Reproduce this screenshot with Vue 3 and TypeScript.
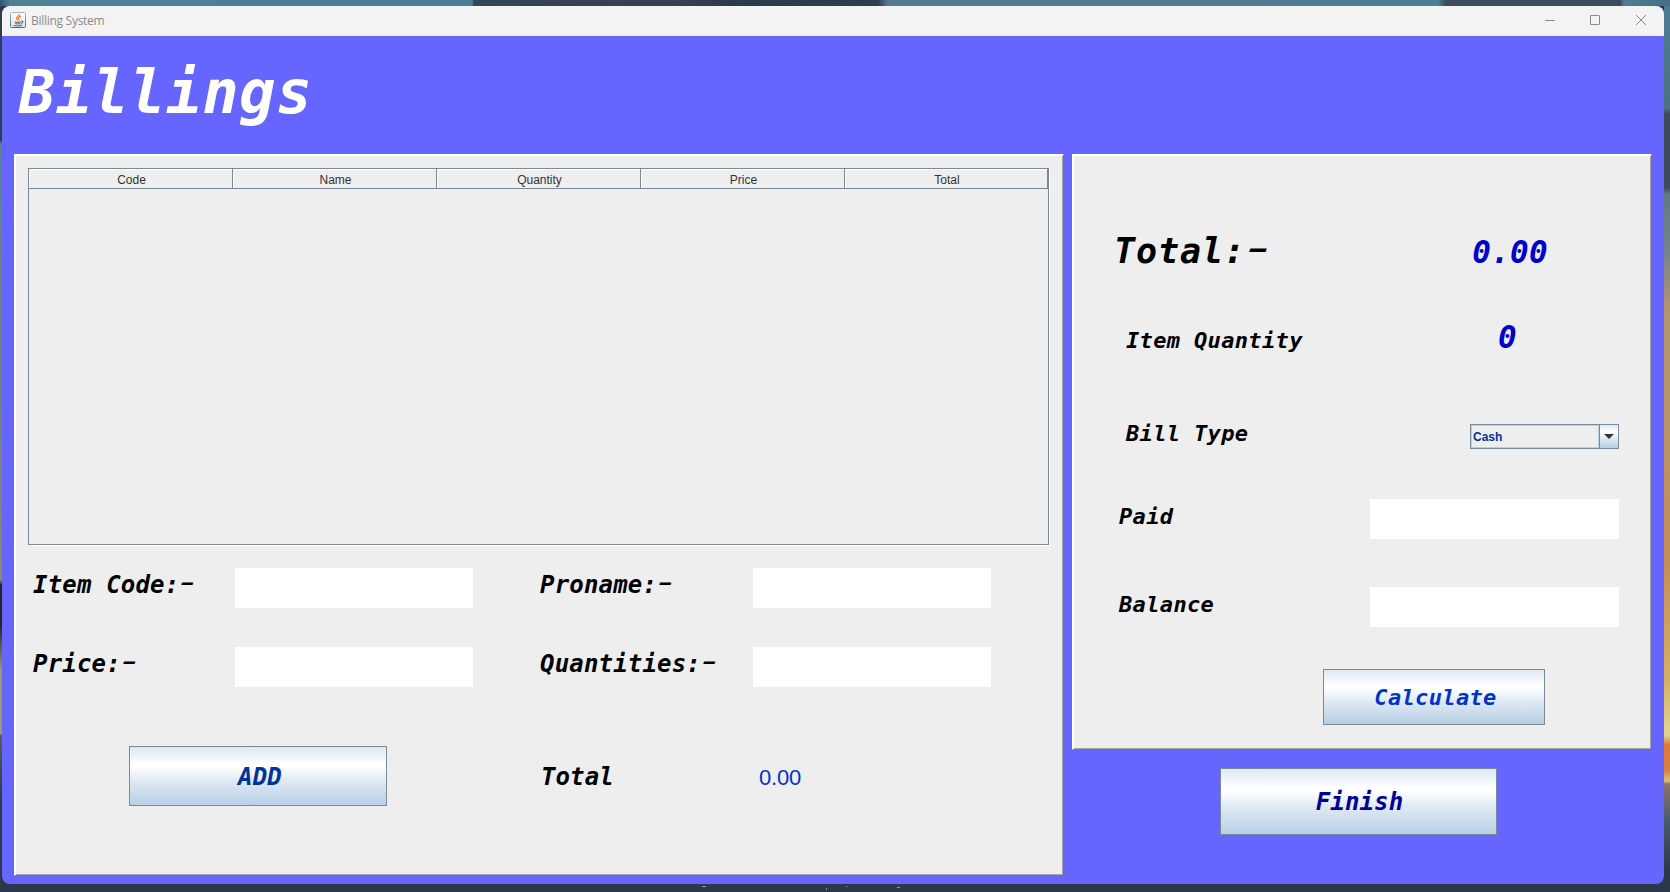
<script setup lang="ts">
import { ref } from 'vue'

const columns: string[] = ['Code', 'Name', 'Quantity', 'Price', 'Total']
const code = ref('')
const proname = ref('')
const price = ref('')
const quantities = ref('')
const paid = ref('')
const balance = ref('')
</script>

<template>
  <div class="desktop">
    <div class="window">
      <header class="titlebar">
        <svg class="app-icon" viewBox="0 0 16 16" width="16" height="16">
          <defs>
            <linearGradient id="cup-bg" x1="0" y1="0" x2="0" y2="1">
              <stop offset="0" stop-color="#ffffff" />
              <stop offset="1" stop-color="#dfe3e6" />
            </linearGradient>
            <linearGradient id="cup-edge" x1="0" y1="0" x2="0" y2="1">
              <stop offset="0" stop-color="#9db8cd" />
              <stop offset="1" stop-color="#4a6c88" />
            </linearGradient>
          </defs>
          <rect x=".5" y=".5" width="15" height="15" rx="1" fill="url(#cup-bg)" stroke="url(#cup-edge)" />
          <path d="M9.3 2.2C9.8 4 6.2 4.6 6.4 6.2c.1.9 1 1.4 1.2 2.2M10.8 4.4C9 5 8 5.7 8.6 6.6c.4.7.3 1.2-.2 1.7" fill="none" stroke="#ee7d1c" stroke-width="1.2" />
          <path d="M4.5 9.8c1.8.6 5 .5 6.5 0M5.3 11.6c1.5.5 3.8.4 5 0M3.5 13.3c2.5.7 6.5.7 8.8-.2M11.3 9.2c2.3-.4 2 1.7-.3 2.2" fill="none" stroke="#4f7590" stroke-width="1.1" />
        </svg>
        <span class="title">Billing System</span>
        <div class="controls">
          <svg viewBox="0 0 12 12" width="12" height="12"><path d="M1 6.5h10" /></svg>
          <svg viewBox="0 0 12 12" width="12" height="12"><rect x="1.5" y="1.5" width="9" height="9" rx=".5" /></svg>
          <svg viewBox="0 0 12 12" width="12" height="12"><path d="M1 1l10 10M11 1L1 11" /></svg>
        </div>
      </header>

      <h1 class="heading mono">Billings</h1>

      <main class="content">
        <section class="panel left">
          <div class="table">
            <div class="thead">
              <div v-for="c in columns" :key="c" class="th">{{ c }}</div>
            </div>
          </div>
          <div class="fields">
            <label class="mono lbl">Item Code:<span class="dash">-</span></label>
            <input v-model="code" class="field" />
            <label class="mono lbl">Proname:<span class="dash">-</span></label>
            <input v-model="proname" class="field" />
            <label class="mono lbl">Price:<span class="dash">-</span></label>
            <input v-model="price" class="field" />
            <label class="mono lbl">Quantities:<span class="dash">-</span></label>
            <input v-model="quantities" class="field" />
          </div>
          <div class="actions">
            <button class="btn add mono">ADD</button>
            <span class="mono sum-label">Total</span>
            <span class="sum">0.00</span>
          </div>
        </section>

        <div class="side">
          <section class="panel right">
            <div class="row r-total"><span class="mono big">Total:<span class="dash">-</span></span><span class="mono val">0.00</span></div>
            <div class="row r-qty"><span class="mono mid">Item Quantity</span><span class="mono val">0</span></div>
            <div class="row r-type">
              <span class="mono mid">Bill Type</span>
              <div class="combo">
                <span class="combo-text">Cash</span>
                <span class="combo-btn"><svg viewBox="0 0 10 5" width="10" height="5"><path d="M0 0h10L5 5z" fill="#333" /></svg></span>
              </div>
            </div>
            <div class="row r-paid"><span class="mono mid">Paid</span><input v-model="paid" class="field wide" /></div>
            <div class="row r-bal"><span class="mono mid">Balance</span><input v-model="balance" class="field wide" /></div>
            <button class="btn calc mono">Calculate</button>
          </section>
          <button class="btn finish mono">Finish</button>
        </div>
      </main>
    </div>
  </div>
</template>

<style>
body {
  margin: 0;
  overflow: hidden;
}
</style>

<style scoped>
* {
  box-sizing: border-box;
}
.desktop {
  width: 1670px;
  height: 892px;
  padding: 6px 6px 8px 2px;
  background:
    linear-gradient(#8d97a3, #8d97a3) 702px 886px / 4px 1px no-repeat,
    linear-gradient(#7c8793, #7c8793) 826px 888px / 1px 2px no-repeat,
    linear-gradient(#66717f, #66717f) 846px 886px / 2px 1px no-repeat,
    linear-gradient(#8d97a3, #8d97a3) 897px 887px / 3px 1px no-repeat,
    linear-gradient(90deg, #34556a 0, #4f8096 10px, #4b7f97 472px, #34455a 474px, #393f52 680px, #2c3b4a 730px, #2f3e4e 878px, #557c92 888px, #557c92 1100px, #4c7e94 1438px, #3c4b5e 1446px, #3c4b5e 1620px, #4c7e94 1624px, #456f84 100%) 0 0 / 1670px 6px no-repeat,
    linear-gradient(180deg, #4d7e94 0, #4d7183 108px, #3c4c5c 114px, #3c4c5c 188px, #607982 194px, #74848a 250px, #b3946e 310px, #b89368 400px, #c58d58 560px, #d5b060 680px, #dfd694 735px, #dd7834 745px, #d98142 770px, #dcc070 781px, #8d7468 784px, #4a5c6c 820px, #2c394b 870px) 1664px 0 / 6px 892px no-repeat,
    linear-gradient(180deg, #2c3e50 0 140px, #5a8390 144px, #7d8474 500px, #8e8b66 580px, #20242c 585px, #20242c 625px, #a09a66 670px, #a09a66 734px, #565c60 735px, #2d3a4b 800px) 0 0 / 2px 892px no-repeat,
    #2b384a;
}
.window {
  display: flex;
  flex-direction: column;
  width: 1662px;
  height: 878px;
  overflow: hidden;
  border-radius: 8px;
  background: #6666ff;
}
.titlebar {
  display: flex;
  align-items: center;
  height: 30px;
  padding: 0 17px 2px 8px;
  background: #f3f3f3;
}
.title {
  margin: 2px 0 0 5px;
  font: 12px/16px "Open Sans", "Noto Sans", sans-serif;
  letter-spacing: -0.28px;
  color: #8c8c8c;
}
.controls {
  display: flex;
  gap: 34px;
  margin-left: auto;
}
.controls svg {
  display: block;
  fill: none;
  stroke: #8a8a8a;
}
.controls svg:nth-child(2) {
  margin-left: -1px;
}
.mono {
  font-family: "DejaVu Sans Mono", "Liberation Mono", monospace;
  font-weight: 700;
  font-style: italic;
  white-space: pre;
  color: #000;
}
.dash {
  display: inline-block;
  font-family: Roboto, sans-serif;
  letter-spacing: 0;
  line-height: 1;
  transform: translate(0.01em, -0.04em) scale(1.75, 0.9);
  transform-origin: 0 50%;
}
.heading {
  height: 118px;
  margin: 0;
  padding-left: 17px;
  font-size: 60px;
  line-height: 112px;
  letter-spacing: 0.6px;
  color: #fff;
}
.content {
  display: flex;
  gap: 8px;
  padding-left: 12px;
}
.panel {
  border: 1px solid;
  border-color: #fff #757575 #757575 #fff;
  background: #eee;
  box-shadow: inset 1px 1px 0 #fff, inset -1px -1px 0 #a6a6a2;
}
.left {
  width: 1050px;
  height: 722px;
  padding: 13px;
}
.table {
  width: 1021px;
  height: 377px;
  border: 1px solid #7a8a99;
  box-shadow: 1px 1px 0 #fff;
}
.thead {
  display: grid;
  grid-template-columns: repeat(4, 204px) 203px;
  grid-template-rows: 20px;
}
.th {
  padding-left: 2px;
  border-right: 1px solid #7a8a99;
  border-bottom: 1px solid #7a8a99;
  box-shadow: inset 1px 1px 0 #fff;
  font: 12px/22px "Liberation Sans", Arial, sans-serif;
  text-align: center;
  color: #333;
}
.fields {
  display: grid;
  grid-template-columns: 202px 238px 280px 238px;
  row-gap: 39px;
  margin: 23px 0 0 5px;
}
.fields .lbl:nth-of-type(even) {
  padding-left: 67px;
}
.lbl {
  font-size: 24px;
  line-height: 34px;
  letter-spacing: 0.18px;
}
.field {
  width: 238px;
  height: 40px;
  padding: 0 4px;
  border: 0;
  outline: 0;
  border-radius: 0;
  background: #fff;
}
.actions {
  display: flex;
  align-items: center;
  margin: 59px 0 0 101px;
}
.btn {
  padding: 0;
  border: 1px solid #7a8a99;
  border-radius: 0;
  background: linear-gradient(180deg, #dde8f3 0, #fff 30%, #fff 33%, #dde8f3 60%, #b8cfe5 100%);
  text-align: center;
}
.add {
  width: 258px;
  height: 60px;
  padding: 2px 0 0 4px;
  font-size: 24px;
  letter-spacing: 0.2px;
  color: #003399;
}
.sum-label {
  width: 218px;
  margin-left: 154px;
  padding-top: 2px;
  font-size: 24px;
  letter-spacing: 0.1px;
}
.sum {
  padding-top: 3px;
  font: 22px/30px "Liberation Sans", Arial, sans-serif;
  letter-spacing: -0.2px;
  color: #0033cc;
}
.side {
  display: flex;
  flex-direction: column;
}
.right {
  width: 580px;
  height: 596px;
  padding: 61px 32px 0 43px;
}
.row {
  display: flex;
  justify-content: space-between;
}
.big {
  margin-left: -2px;
  font-size: 35px;
  line-height: 70px;
  letter-spacing: 0.9px;
}
.mid {
  font-size: 22px;
  line-height: 42px;
  letter-spacing: 0.35px;
}
.val {
  font-size: 31px;
  line-height: 40px;
  letter-spacing: 0.3px;
  color: #0000cc;
}
.r-total {
  height: 90px;
  padding-right: 71px;
}
.r-total .val {
  line-height: 72px;
}
.r-qty {
  height: 90px;
  padding: 14px 102px 0 10px;
}
.r-qty .val {
  line-height: 35px;
}
.r-type {
  height: 103px;
  padding: 17px 0 0 10px;
}
.r-paid,
.r-bal {
  height: 88px;
  padding-left: 3px;
}
.r-paid .mid,
.r-bal .mid {
  line-height: 36px;
}
.wide {
  width: 249px;
}
.combo {
  display: flex;
  width: 149px;
  height: 25px;
  margin-top: 11px;
  border: 1px solid #7a8a99;
}
.combo-text {
  flex: 1;
  padding-left: 1px;
  border: 1px solid #b8cfe5;
  font: 700 12px/23px "Liberation Sans", Arial, sans-serif;
  color: #003399;
}
.combo-btn {
  display: flex;
  align-items: center;
  justify-content: center;
  width: 19px;
  border-left: 1px solid #7a8a99;
  background: linear-gradient(180deg, #dde8f3 0, #fff 30%, #dde8f3 60%, #b8cfe5 100%);
}
.calc {
  display: block;
  width: 222px;
  height: 56px;
  margin: -6px 0 0 207px;
  padding-left: 3px;
  font-size: 22px;
  letter-spacing: 0.35px;
  color: #0033cc;
}
.finish {
  width: 277px;
  height: 67px;
  margin: 18px 0 0 148px;
  padding-left: 2px;
  font-size: 24px;
  letter-spacing: 0.15px;
  color: #000099;
}
</style>
